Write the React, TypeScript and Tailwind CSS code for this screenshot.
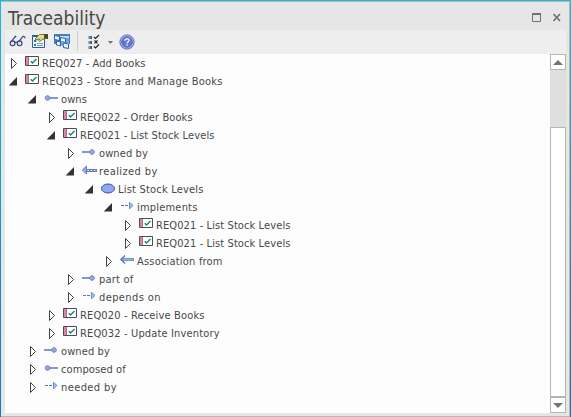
import React from "react";

type IconKind = "req" | "ownsL" | "ownsR" | "realized" | "usecase" | "depends" | "assoc";

interface TreeItem {
  level: number;
  open?: boolean;
  icon: IconKind;
  label: string;
  tracking?: string;
}

const items: TreeItem[] = [
  { level: 0, icon: "req", label: "REQ027 - Add Books" },
  { level: 0, open: true, icon: "req", label: "REQ023 - Store and Manage Books", tracking: "tracking-[0.25px]" },
  { level: 1, open: true, icon: "ownsL", label: "owns" },
  { level: 2, icon: "req", label: "REQ022 - Order Books" },
  { level: 2, open: true, icon: "req", label: "REQ021 - List Stock Levels" },
  { level: 3, icon: "ownsR", label: "owned by" },
  { level: 3, open: true, icon: "realized", label: "realized by", tracking: "tracking-[0.4px]" },
  { level: 4, open: true, icon: "usecase", label: "List Stock Levels", tracking: "tracking-[0.2px]" },
  { level: 5, open: true, icon: "depends", label: "implements", tracking: "tracking-[0.2px]" },
  { level: 6, icon: "req", label: "REQ021 - List Stock Levels" },
  { level: 6, icon: "req", label: "REQ021 - List Stock Levels" },
  { level: 5, icon: "assoc", label: "Association from", tracking: "tracking-[0.2px]" },
  { level: 3, icon: "ownsR", label: "part of", tracking: "tracking-[0.2px]" },
  { level: 3, icon: "depends", label: "depends on", tracking: "tracking-[0.4px]" },
  { level: 2, icon: "req", label: "REQ020 - Receive Books", tracking: "tracking-[0.15px]" },
  { level: 2, icon: "req", label: "REQ032 - Update Inventory", tracking: "tracking-[0.15px]" },
  { level: 1, icon: "ownsR", label: "owned by" },
  { level: 1, icon: "ownsL", label: "composed of" },
  { level: 1, icon: "depends", label: "needed by", tracking: "tracking-[0.4px]" },
];

const indents = ["pl-[5px]", "pl-[24px]", "pl-[43px]", "pl-[62px]", "pl-[81px]", "pl-[100px]", "pl-[119px]"];

function Expander({ open }: { open?: boolean }) {
  return (
    <svg width="10" height="18" className="shrink-0 overflow-visible">
      {open ? (
        <path d="M7 5v8.500H-1.300z" fill="#333" />
      ) : (
        <path d="M1.500 4.500v10l5-5z" fill="#fff" stroke="#444" />
      )}
    </svg>
  );
}

function NodeIcon({ kind }: { kind: IconKind }) {
  return (
    <svg width="17" height="18" className="mr-[1px] ml-[4px] shrink-0">
      {kind === "req" && (
        <>
          <path d="M1.500 2.500h13v9h-13z" fill="#fff" stroke="#4c4c4c" />
          <path d="M2 3h2v8H2z" fill="#ee7e9e" />
          <path d="M4 3h1v8H4z" fill="#85799f" />
          <path d="m6.800 7.300 1.700 1.700 4-4" fill="none" stroke="#128477" strokeWidth="1.400" />
        </>
      )}
      {kind === "ownsL" && (
        <>
          <path d="M6 8h9" stroke="#5479c4" strokeWidth="1.500" />
          <path d="M3.500 5.800h2l1.200 1.200v2l-1.200 1.200h-2L2.300 9V7z" fill="#a1a8d8" stroke="#6b86c8" />
        </>
      )}
      {kind === "ownsR" && (
        <>
          <path d="M1 8h9" stroke="#5479c4" strokeWidth="1.500" />
          <path d="M10 5.800h2l1.200 1.200v2L12 10.200h-2L8.800 9V7z" fill="#a1a8d8" stroke="#6b86c8" />
        </>
      )}
      {kind === "realized" && (
        <>
          <path d="M5.500 4v8L1.300 8z" fill="#9aa9dc" stroke="#6384ca" />
          <path d="M5.500 7.500h1.500v1H5.500zM8 7h2v3H8zm3 0h2v3h-2zm3 0h2v3h-2z" fill="#6e8ed2" />
          <path d="M6 7.500h10M6 9.500h10" stroke="#4f72bf" strokeDasharray="2 1" />
        </>
      )}
      {kind === "usecase" && <ellipse cx="8" cy="8.500" rx="6.500" ry="4.500" fill="#8baaf2" stroke="#3c4c9c" />}
      {kind === "depends" && (
        <>
          <path d="M2 7.500h8" stroke="#5479c4" strokeDasharray="3 1" />
          <path d="M11 4v7l3-3.500z" fill="#a9bce8" />
          <path d="M10.500 4v7M11.500 5.300 14 7.500l-2.500 2.200" fill="none" stroke="#6b90d2" />
        </>
      )}
      {kind === "assoc" && (
        <>
          <path d="M2 7.500h13" stroke="#5479c4" strokeWidth="2.600" />
          <path d="M3 7.500h11.500" stroke="#a9bce8" strokeWidth=".9" />
          <path d="m6 3.500-4 4 4 4" fill="none" stroke="#5479c4" strokeWidth="1.500" />
        </>
      )}
    </svg>
  );
}

function Toolbar() {
  return (
    <div className="flex h-6 shrink-0 items-center bg-[#eeeeee] pl-[4px]">
      <svg width="18" height="18">
        <g fill="none" stroke="#2f3a76" strokeWidth="1.100">
          <path d="M2 9 6.300 3.300l1 .9M9.800 8.500 14 3.300q2 0 2 2" />
          <circle cx="3.600" cy="10.300" r="2.400" fill="#d6e5fa" />
          <circle cx="10.600" cy="10.300" r="2.400" fill="#d6e5fa" />
          <path d="M6 9.500q1-1 2 0" />
        </g>
      </svg>
      <svg width="18" height="18" className="ml-[4px]">
        <path d="M1.500 2.500h12v12h-12z" fill="#f7fbff" stroke="#2e609e" />
        <path d="M1 2h6v2H1z" fill="#315f98" />
        <path d="M3 7h2v2H3zm0 4h2v2H3z" fill="#2f6fc0" />
        <path d="M6 10.500h6M6 12.500h6" stroke="#669de0" />
        <path d="M4 6 8.500 1.500h5v4.500l-2 .5-3 2-1-1 1-1.500-3.500 1z" fill="#d8d880" stroke="#77763b" />
        <path d="m7 4.500 2.500-1.500h3" stroke="#fbf8c0" fill="none" />
        <path d="M13 1h4v5h-2l-2-1z" fill="#4b4c20" />
      </svg>
      <svg width="18" height="18" className="ml-[4px]">
        <path d="M1 1h16v10H1z" fill="#4b7cbd" />
        <path d="M7 3h9v8H7z" fill="#b9dcf7" />
        <g fill="#eaf5ff" stroke="#2f62a8">
          <path d="m1.500 2.500 5 1v4l-5-1zM3.500 8l4 1v4l-4-1zM7.500 4.500l5 1v4l-5-1zM10.500 10l5 1v4.500l-5-1z" />
        </g>
        <path d="M8 10h2.500v3L8 12.500zM13 5h3v5h-3z" fill="#6ea3dc" />
      </svg>
      <div className="mb-[2px] ml-[6px] h-5 w-px bg-[#cccccc]" />
      <svg width="16" height="18" className="ml-[9px]">
        <defs>
          <linearGradient id="bullet">
            <stop stopColor="#a8c9e6" />
            <stop offset="1" stopColor="#303f55" />
          </linearGradient>
        </defs>
        <path d="M1 3h4v3H1zM1 8h4v3H1zM1 13h4v3H1z" fill="url(#bullet)" />
        <path
          d="m7 4 1.500 1.500L12 2M7 13.500 8.500 15 12 11.500M7.500 7.300l3 3m0-3-3 3"
          fill="none"
          stroke="#222"
          strokeWidth="1.200"
        />
      </svg>
      <svg width="7" height="5" className="ml-[4px]">
        <path d="M.8 1h5.400L3.500 4z" fill="#777" />
      </svg>
      <svg width="16" height="16" className="ml-[5px]">
        <circle cx="8" cy="8" r="7.100" fill="#a9b6ee" stroke="#5a6dc4" />
        <circle cx="8" cy="8" r="5.300" fill="#6376cc" stroke="#5265bd" strokeWidth=".8" />
        <path d="M6 6.700C6 4 10.300 4.300 10 6.700 9.800 8 8 7.800 8 9.300m0 1v1.400" fill="none" stroke="#fff" strokeWidth="1.300" />
      </svg>
    </div>
  );
}

export default function App() {
  return (
    <div className="h-[417px] w-[571px] bg-linear-to-b from-[#16bdd2] to-[#157bb0] pt-px pr-px pl-px font-['DejaVu_Sans_Condensed','DejaVu_Sans',sans-serif] text-[#484848]">
      <div className="flex h-full flex-col border-t border-r border-b border-[#b8b8b8] bg-[#e6e6e6] pr-[3px] pb-[3px] pl-[4px]">
        <header className="flex h-7 shrink-0 items-center justify-between pr-[3px] pl-[3px]">
          <h1 className="pt-[5px] text-[19px] leading-[23px] whitespace-nowrap">Traceability</h1>
          <svg width="32" height="12" className="mt-[3px]">
            <path d="M1.500 2.500h8v7h-8z" fill="none" stroke="#707070" />
            <path d="M1 1h9v2H1z" fill="#707070" />
            <path d="m22.500 2 6.500 7m0-7-6.500 7" stroke="#707070" strokeWidth="1.700" />
          </svg>
        </header>
        <Toolbar />
        <main className="flex min-h-0 flex-1 bg-[#fdfdfd]">
          <div className="flex-1 overflow-hidden">
            {items.map((item, i) => (
              <div key={i} className={`flex h-[18px] items-center ${indents[item.level]}`}>
                <Expander open={item.open} />
                <NodeIcon kind={item.icon} />
                <span className={`mt-[2px] text-[11px] leading-[18px] whitespace-nowrap ${item.tracking ?? "tracking-[0.1px]"}`}>
                  {item.label}
                </span>
              </div>
            ))}
          </div>
          <div className="flex w-4 shrink-0 flex-col bg-[#dfdfdf]">
            <div className="flex h-4 items-center justify-center border border-[#b5b5b5] bg-white pt-px">
              <svg width="10" height="5"><path d="M5 0 10 5H0z" fill="#747474" /></svg>
            </div>
            <div className="mt-[57px] flex-1 border border-[#b5b5b5] bg-white" />
            <div className="flex h-4 items-center justify-center border border-[#b5b5b5] bg-white pt-px">
              <svg width="10" height="5"><path d="M0 0h10L5 5z" fill="#747474" /></svg>
            </div>
          </div>
        </main>
      </div>
    </div>
  );
}
